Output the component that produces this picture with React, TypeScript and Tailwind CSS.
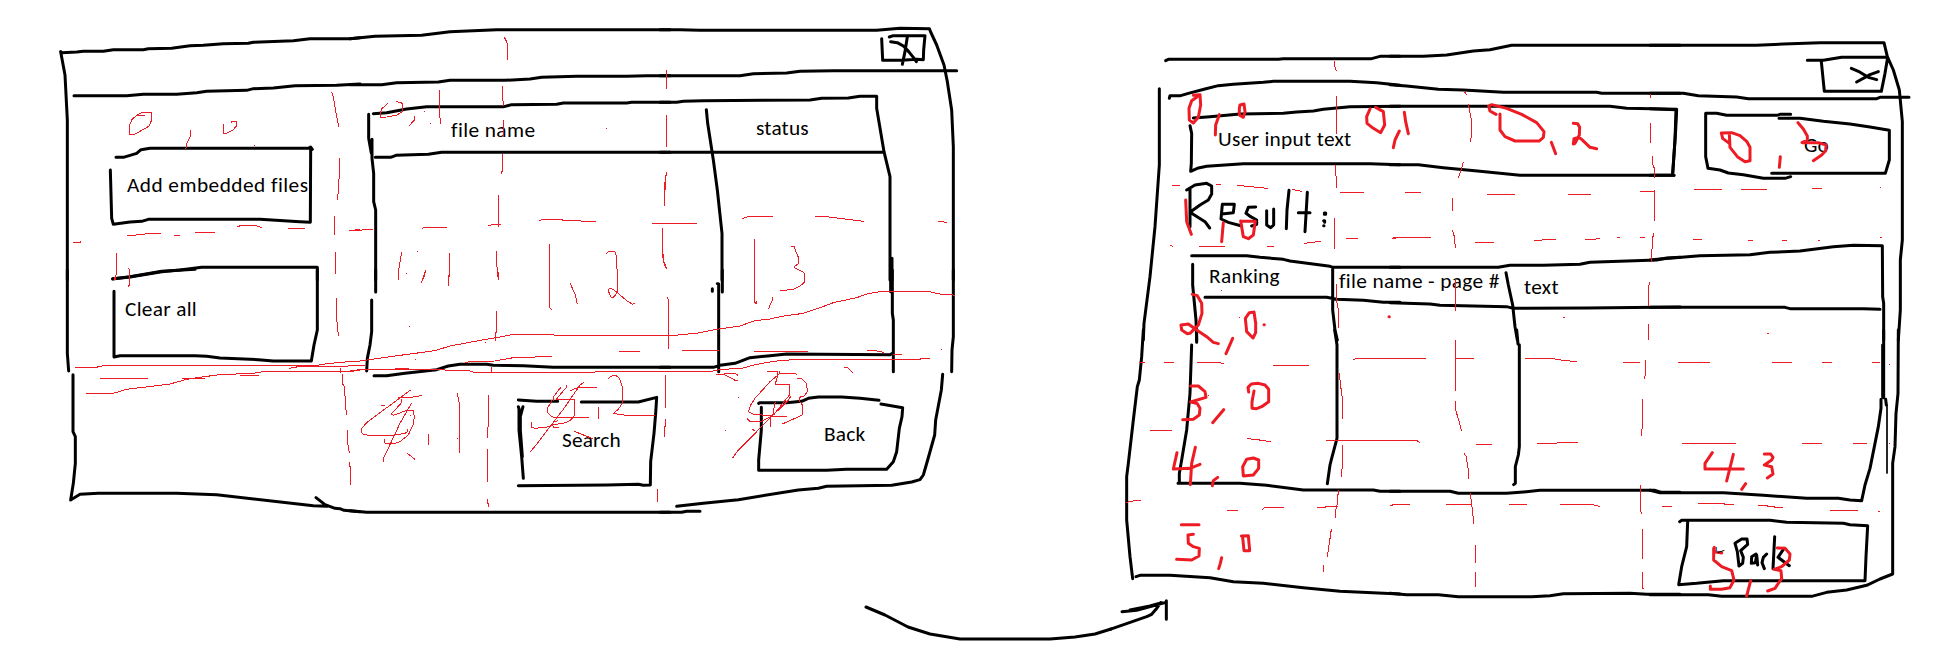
import React from "react";

type Tile = {
  x: number;
  y: number;
  ink: string;
  thin?: string;
  marker?: string;
};

// Pen strokes, grouped by canvas tile. Units are thirds of a pixel from the tile's corner.
const tiles: Tile[] = [
  {
    x: 40,
    y: 10,
    ink: "M62,125 L65,128 110,126 130,124 190,124 220,119 310,119 325,116 395,115 450,107 490,106 550,101 625,100 640,97 760,92 810,86 930,86 960,83 M62,125 L75,195 82,330 82,810 M102,257 H260 L310,253 410,253 470,248 500,244 620,241 640,236 700,234 765,227 890,226 960,222 M228,442 H250 L290,430 303,419 330,415 H805 L812,411 817,418 M812,418 L811,637 780,635 660,628 H325 L305,634 270,636 220,643 215,625 211,480 M218,806 L270,801 365,785 420,780 485,772 H832 V810",
    thin: "M268,373 L269,345 276,328 292,315 304,308 334,307 334,332 328,348 312,357 284,373 268,373 M292,315 H314 M550,342 V370 L562,369 578,361 590,347 590,334 574,334 574,338 M452,360 V378 L441,400 437,418 M643,407 h3 M875,247 L880,262 890,320 896,350 M898,445 V490 L895,545 892,570 M883,618 V674 M886,727 V791 M262,676 H278 L325,671 H362 M403,676 H419 M466,667 H524 M592,650 L602,647 H648 L665,653 M745,655 H794 M100,697 H120 L123,694 M928,661 H945 L948,658 H960 M229,730 V790 L226,810 M265,773 L268,780 V810",
  },
  {
    x: 350,
    y: 10,
    ink: "M0,86 L75,79 215,76 300,65 440,59 H960 M0,224 H95 L140,218 265,216 300,211 465,211 540,207 575,202 680,199 830,199 890,197 960,197 M70,311 L110,308 170,297 230,290 H462 L485,284 620,283 640,279 830,279 845,277 960,277 M56,313 V385 L64,430 M66,388 V445 L71,490 71,575 77,600 V810 M76,442 H122 L138,436 235,433 275,427 H960",
    thin: "M463,82 L470,95 472,105 V150 M458,229 V265 L461,287 M461,330 V382 M458,433 V478 L454,491 M445,556 V650 M415,647 L430,643 H453 M217,655 L225,652 H291 M568,631 L582,628 H632 L640,631 687,631 695,634 H738 M906,640 H960 M950,180 V237 M950,316 V411 M949,487 L946,520 943,587 M937,655 V735 L943,765 950,776 M0,661 H20 L68,658 M268,240 V290 L271,340 h3 M113,280 L95,297 90,311 92,322 110,321 140,315 158,305 158,284 155,279 138,274 M193,317 V330 L184,340 178,349 M223,304 h3 M241,341 h3 M769,355 h3 M202,724 h3 M169,790 h3 M155,727 L147,775 145,810 M298,730 V790 L295,810 M227,779 L218,808 M439,724 L440,760 445,810 M598,703 V810 M769,731 L775,725 H795 L800,740 802,810",
  },
  {
    x: 660,
    y: 10,
    ink: "M0,59 H60 L120,61 H650 L720,55 808,56 812,66 830,105 852,165 862,215 875,300 880,410 V810 M665,86 L668,151 H725 L770,148 790,149 791,120 795,77 H700 L688,81 M742,80 L735,125 727,163 M692,95 L712,98 730,108 742,120 760,142 769,155 M0,197 H240 L280,191 380,189 420,184 520,182 H890 M0,277 H50 L70,274 130,272 450,270 485,265 565,264 600,259 H650 V295 L672,425 690,500 V810 M696,745 V810 M0,427 H672 M139,299 L143,340 160,450 172,540 186,670 V810",
    thin: "M19,180 V237 M19,316 V411 M19,487 L13,530 V587 M0,640 H111 M7,655 V715 L12,755 20,776 M247,626 L268,619 H339 M466,619 H490 L611,634 M835,634 L860,637 M283,688 V810 M393,709 H403 L405,718 415,742 V762 L403,769 403,773 432,788 V810 M430,368 h3",
  },
  {
    x: 40,
    y: 270,
    ink: "M82,0 V250 L86,303 M99,314 V485 L106,500 106,580 100,640 92,690 120,673 175,670 410,670 530,674 820,707 862,709 M828,683 L855,704 885,715 900,716 912,721 960,725 M218,27 L270,20 365,4 465,-2 M832,0 V180 L822,225 814,273 H700 L655,269 540,264 500,259 465,257 H240 L222,261 V64",
    thin: "M229,0 V12 L222,30 M268,0 V45 L265,50 M886,0 V12 M889,85 V135 L895,197 M901,294 V308 M907,313 V340 L913,350 919,434 M922,481 V510 L928,550 M928,577 V587 L931,590 V644 M105,292 H168 L195,286 H836 M748,295 L775,290 830,286 870,280 950,273 H960 M180,325 H323 M427,325 H495 M600,316 H656 M138,370 H220 L260,358 390,342 440,328 470,323 540,314 640,310 675,304 H935 L960,300 M775,289 H920 L930,286 H960",
  },
  {
    x: 350,
    y: 270,
    ink: "M77,0 V66 M65,90 V185 L60,225 52,265 50,303 M72,317 H110 L165,310 260,299 295,288 330,283 410,283 430,286 520,287 610,292 H960 M0,722 L50,727 H960 M505,390 L560,394 H623 M694,396 H865 L920,382 917,430 912,490 902,575 901,645 880,646 865,643 770,645 505,647 M505,410 L512,436 519,410 M507,415 V480 L515,560 520,625 M511,430 V480 L517,560",
    thin: "M145,0 V25 M169,10 h3 M227,0 L222,22 214,38 M298,0 V10 L295,47 M442,0 L445,10 V28 M598,0 V113 L605,119 M802,0 V62 L797,75 790,82 783,82 776,65 776,57 785,56 800,66 830,92 848,103 854,100 M661,40 L667,55 676,75 682,103 M439,124 V186 L436,190 V214 M178,170 h3 M196,268 h3 M406,217 h3 M0,274 H25 L50,270 150,256 255,242 300,228 380,213 455,200 485,194 H610 L613,196 H960 M345,278 L360,275 435,273 490,263 530,262 605,259 M808,244 H869 M952,82 L955,90 V238 M0,286 H45 M0,303 L20,300 130,297 270,297 285,300 350,300 370,306 H735 V303 H960 M135,295 H178 M424,290 V306 M180,361 L150,384 90,428 50,458 36,475 34,487 40,493 55,496 130,496 165,490 174,483 170,476 M180,361 h3 M143,382 H185 L217,376 M155,388 L153,400 124,432 130,436 165,423 190,421 193,440 190,462 175,495 150,515 135,520 105,520 104,508 M184,400 L150,460 110,545 100,565 V577 M93,406 H106 M181,436 h3 M322,370 L328,400 V548 M322,505 h3 M235,492 V526 M172,550 L196,569 M415,376 V470 L412,475 V503 M412,538 V635 M412,688 V698 L415,702 V710 M1,589 V644 M634,350 L612,378 610,392 M649,344 V352 L618,389 H673 V437 L660,452 640,460 607,464 600,470 555,475 544,472 V457 M607,389 L594,412 592,428 605,439 610,442 H718 M661,362 L685,352 H742 M701,337 L690,345 640,418 600,470 560,523 541,545 M745,410 V448 M625,452 L610,455 607,465 612,473 626,472 M673,484 L728,506 M775,325 L785,318 797,316 808,325 817,350 V400 L805,418 790,430 805,433 830,436 H915 M946,316 V413 M946,448 V465 L943,473 V500 M922,658 V695",
  },
  {
    x: 660,
    y: 270,
    ink: "M187,0 V66 M176,305 V42 L172,41 M157,56 V64 M692,0 V65 M697,0 V130 L700,150 V305 M880,0 V200 L876,240 875,305 M848,313 L844,360 827,450 824,495 803,570 790,615 780,629 755,636 695,646 500,649 475,655 415,660 235,689 130,700 50,709 M0,292 H160 L180,286 225,280 270,263 330,257 380,252 690,254 700,248 M0,727 H65 L80,724 H120 M296,400 L300,398 H380 L425,394 445,385 475,381 545,381 600,385 657,391 M663,402 L728,413 726,440 718,475 710,545 700,575 680,598 H560 L500,601 H296 V570 L304,480 V412",
    thin: "M283,0 V98 L290,100 290,94 M418,0 L432,8 V38 L420,48 400,58 360,62 M337,80 V90 L325,118 M22,82 L25,90 V238 M0,196 H45 L70,193 110,190 170,178 240,168 285,152 330,147 365,139 430,130 475,115 520,98 590,83 620,72 665,64 H803 L840,72 870,74 886,76 M66,241 H178 M282,244 H443 M621,241 H640 L672,247 M700,253 H725 M844,238 h3 M0,303 H160 L180,299 250,294 285,284 340,274 410,268 H780 L785,265 H809 M168,313 H190 L210,322 225,331 234,331 M192,310 H225 L235,317 M235,382 h3 M196,481 h3 M553,291 H560 L578,307 M16,316 V413 M16,448 V468 L13,473 V500 M322,304 H352 V320 L346,342 H388 V375 L340,436 M358,304 V312 L330,335 285,385 272,405 265,425 280,432 340,439 H380 M358,310 H402 L410,313 M412,325 H425 L440,342 442,365 432,378 418,382 420,395 427,405 427,435 405,445 385,454 367,462 M394,377 L385,390 355,420 335,438 290,485 235,540 217,565 M262,446 L270,454 305,454 335,438 M346,395 L340,425 338,440 M331,440 V470 M277,478 L284,482",
  },
  {
    x: 1110,
    y: 30,
    ink: "M167,92 L175,88 H505 L520,86 785,86 810,79 870,79 M148,176 V405 L135,590 120,740 102,880 100,930 M178,205 L180,197 H212 L235,190 285,177 325,167 370,163 460,157 490,154 H720 L800,158 870,166 M250,264 L300,260 390,252 520,250 560,246 610,243 640,238 720,230 870,229 M240,287 L245,310 244,400 242,424 262,415 290,409 400,401 H780 L870,404 M230,480 L255,465 290,460 305,468 305,492 295,510 270,525 240,547 285,575 299,594 M240,475 V590 M335,552 L370,548 373,523 337,523 333,567 355,577 395,588 M437,531 L415,532 408,550 422,560 440,570 440,583 425,588 M470,542 V585 L482,593 491,585 V537 M537,481 L531,540 529,596 M592,487 L585,605 M565,548 H600 M643,549 h4 v4 h-4 M641,572 h3 v5 M641,587 h1 M245,677 H410 L450,682 520,688 540,693 660,709 670,712 H870 M248,703 V765 L258,870 260,930 M285,802 H650 L680,808 760,811 820,817 870,817 M668,712 V840 L675,900 682,930",
    thin: "M673,94 V105 L679,122 M679,199 V311 M676,404 V430 L679,440 V473 M673,565 V656 M679,763 V810 L685,840 V893 M186,466 H210 M318,463 H333 M381,466 L473,475 M547,478 L575,484 M691,487 H761 M180,646 L190,650 M268,649 H344 M471,649 H491 M583,640 L632,634 M708,625 H743 M847,626 L870,622 M333,780 h3 M386,861 h5",
    marker:
      "M250,196 L270,194 272,225 265,262 250,279 238,270 237,235 245,212 262,200 M328,254 L317,285 316,315 M390,225 L402,222 405,245 400,262 388,255 388,235 390,225 M797,232 L820,245 824,285 812,308 790,295 771,280 770,260 780,237 M868,303 L855,330 850,353 M227,510 L230,575 244,613 M340,578 L335,635 M392,573 L436,574 430,615 415,626 400,620 392,573 M247,793 L262,797 275,820 276,850 265,885 240,910 232,911 215,900 213,885 235,882 260,900 290,920 310,937 325,941 M432,846 L437,880 437,908 429,924 410,905 406,865 418,848 432,846 M368,925 L348,971 M462,884 h1 M837,860 h1",
  },
  {
    x: 1390,
    y: 30,
    ink: "M0,79 H100 L170,75 250,63 300,59 365,46 H870 M0,164 L50,168 145,178 220,180 340,187 H620 L635,190 H870 M0,229 H660 L710,235 860,238 857,300 848,432 M0,404 H85 L160,413 270,424 390,436 H852 M0,712 H325 L360,706 460,706 570,703 600,697 800,690 830,684 870,682 M0,818 L120,822 150,826 350,830 370,835 590,834 870,831 M348,728 L355,765 368,825 375,890 382,930",
    thin: "M223,187 H227 L229,196 M235,223 L243,265 V325 L241,335 M220,397 L210,430 205,445 M187,505 V542 M187,599 L193,620 196,654 M196,750 V843 M781,192 V203 M781,280 V338 M787,379 V400 L793,415 V443 M793,481 V572 M790,610 L787,640 784,697 M778,757 L775,780 V827 M775,883 V930 M45,487 H92 M291,493 H374 M534,493 H602 M751,484 H793 M5,626 L15,622 H122 M255,637 H311 M433,631 H455 L460,628 H497 M585,628 H612 L629,625 M681,622 H689 M750,622 H764 M520,861 h4",
    marker:
      "M43,247 L47,275 55,311 M318,253 L300,243 296,228 305,224 350,235 395,253 440,278 462,305 460,322 448,333 375,333 345,320 330,300 330,252 M484,337 L497,371 M550,280 L563,281 569,292 568,315 555,340 550,342 552,326 565,322 575,328 600,352 620,356",
  },
  {
    x: 1650,
    y: 30,
    ink: "M0,46 H320 L400,42 510,38 H702 L712,80 730,120 748,180 757,275 V630 L751,690 V840 L745,930 M472,91 H520 L575,82 H713 L705,130 694,184 H523 L514,95 M604,115 L625,124 655,142 680,149 M685,125 L660,134 620,156 M0,190 H100 L145,197 260,201 295,206 H680 L690,202 H777 M0,236 L78,239 75,330 68,432 M0,436 H72 M422,253 H390 L380,256 H230 L200,250 H167 V380 L174,415 210,420 235,429 280,434 340,445 H405 L422,440 M387,265 H450 L520,274 600,282 660,291 718,301 V390 L706,430 H365 M0,690 L30,687 150,677 300,674 360,667 450,663 550,650 610,646 697,647 698,800 701,820 V930 M0,832 H405 L420,836 640,836 690,838",
    thin: "M132,478 H216 M273,478 H351 M486,475 H516 M129,628 H156 M294,631 H309 M396,631 H411 M504,631 H509 M690,622 H696 M690,472 h3 M352,909 h5",
    marker:
      "M238,340 L218,325 214,309 245,308 270,317 290,334 300,352 300,392 285,395 262,380 240,352 238,312 M391,380 L388,412 M444,278 L460,297 472,318 472,330 456,338 H505 L528,345 527,362 515,375 490,392",
  },
  {
    x: 1110,
    y: 330,
    ink: "M100,0 L95,80 88,150 82,170 70,270 55,400 50,440 V570 L60,680 68,746 M78,740 L90,736 180,736 300,743 370,755 460,760 580,773 690,784 870,792 M260,0 V37 M245,45 L240,190 230,300 215,390 208,430 V458 M204,460 H390 L470,466 580,480 H790 L810,484 870,484 M674,0 L681,45 V325 L665,385 660,405 652,461 M0,898 L110,860 125,853 138,838 152,818 M36,845 L80,841 168,817 M60,840 L120,828 155,818 M169,812 V868",
    thin: "M88,97 H105 M163,97 H192 M262,97 H318 L342,100 M489,106 H597 M730,88 L742,85 H870 M688,130 L691,160 697,205 V266 M697,346 V405 L694,440 M685,481 L682,520 676,545 V563 M664,598 L658,640 652,680 M640,706 V725 M120,301 H185 M411,326 L445,329 455,332 483,334 M648,331 H870 M48,517 L70,513 92,511 M351,541 H383 M457,538 L465,532 H521 M622,532 H645 L650,529 H685 M840,526 L870,523 M293,196 h4",
    marker:
      "M242,168 H265 L285,185 288,202 242,216 262,221 270,235 268,255 250,268 218,269 M341,239 L308,278 M416,186 L414,172 424,162 445,160 465,165 476,178 476,215 455,230 440,236 426,235 426,215 432,183 M201,368 L190,417 240,415 270,403 M256,352 L245,400 241,464 M323,442 L310,452 307,467 M410,388 L398,410 400,438 430,435 446,415 446,390 430,384 410,388 M214,584 H267 M250,613 L234,615 235,640 250,650 268,655 267,678 245,690 200,688 M335,683 L331,700 326,716 M394,618 L415,617 419,662 402,662 398,622",
  },
  {
    x: 1390,
    y: 330,
    ink: "M380,0 L384,42 M388,44 V350 L385,375 376,410 V460 L371,464 M0,484 H180 L205,490 350,490 400,486 450,481 H795 L815,487 H870 M0,790 L50,794 145,794 205,800 425,800 480,797 520,791 720,790 770,793 H870",
    thin: "M196,30 V182 M0,85 H107 M196,85 H252 M196,213 V237 L206,270 214,302 M222,370 L228,378 235,420 V446 M241,490 L250,565 V581 M256,645 V698 M256,727 V770 M405,85 H480 L520,91 560,95 M699,97 H750 M864,97 H870 M775,0 V30 M766,91 V132 L763,147 M757,208 V287 L754,318 M751,465 V537 L754,551 M757,598 V686 M757,727 V775 h4 M0,331 H80 L89,338 M258,343 H306 M441,340 H500 L503,337 H564 M0,526 L15,523 H60 M168,523 H244 M357,523 H411 M510,523 H605 L629,529 M816,529 H846",
  },
  {
    x: 1650,
    y: 330,
    ink: "M701,0 V203 M698,45 V200 M693,208 V235 L685,290 675,340 660,415 645,465 635,512 600,510 565,505 470,505 340,496 220,488 H30 L0,481 M707,208 L709,225 M745,0 L744,190 738,250 735,350 728,400 V732 L690,747 650,766 590,780 530,787 485,799 H215 L175,794 H0 M89,575 L95,571 H360 L410,577 580,580 600,584 653,587 648,680 645,752 H220 L140,760 86,764 95,710 110,650 113,575 M255,640 L262,665 267,708 M257,638 L275,627 291,627 293,643 272,662 280,682 278,700 267,708 M318,672 L305,680 304,700 316,698 320,675 323,705 M350,672 L340,682 336,698 343,716 M374,620 L369,716 M402,655 L384,682 418,707",
    thin: "M84,97 H180 M366,97 H426 M516,97 H546 M666,97 H690 M717,103 h3 M96,340 H258 M456,340 H516 M609,340 H651 M717,340 h3 M36,529 H66 M144,520 H222 L225,523 H252 M324,526 H350 L354,529 H372 L375,532 H399 M540,541 H624 M684,544 h5",
    marker:
      "M215,669 L193,665 V652 M191,655 V690 L215,710 245,722 252,750 240,773 215,778 181,778 V768 M302,752 L290,798 M382,654 L405,655 420,672 418,690 395,710 372,718 393,722 395,745 375,775 353,783 M187,368 L165,400 165,417 H280 M250,373 L230,453 M287,461 L275,478 M343,372 H362 L369,382 365,390 343,405 365,410 369,432 352,444",
  },
];

function Tiles({ pen }: { pen: "ink" | "thin" | "marker" }) {
  const scale = 1 / 3;
  return (
    <>
      {tiles.map((t) =>
        t[pen] ? (
          <path
            key={`${t.x}-${t.y}`}
            d={t[pen]}
            transform={`translate(${t.x} ${t.y}) scale(${scale})`}
          />
        ) : null,
      )}
    </>
  );
}

function Sketch() {
  return (
    <svg
      className="pointer-events-none absolute inset-0"
      width="1946"
      height="647"
      viewBox="0 0 1946 647"
      fill="none"
      strokeLinecap="round"
      strokeLinejoin="round"
    >
      <g stroke="#000" strokeWidth="9">
        <Tiles pen="ink" />
        <path strokeWidth="3" d="M866,607 L885,615 908,627 930,634 960,639 1050,639 1075,637 1095,634 1111,629" />
        <path strokeWidth="1.7" d="M1887,405 V473" />
      </g>
      <g stroke="#ed1c24" strokeWidth="3" strokeLinecap="butt" shapeRendering="crispEdges">
        <Tiles pen="thin" />
      </g>
      <g stroke="#ed1c24" strokeWidth="9">
        <Tiles pen="marker" />
      </g>
      <path d="M1716.5 547v5" stroke="#0a78c8" strokeLinecap="butt" />
      <path d="M1718 552.5l6-2" stroke="#000" />
    </svg>
  );
}

function FilesWindow() {
  return (
    <section className="w-[1100px] shrink-0">
      <header className="h-[96px]" />
      <div className="flex h-[275px]">
        <div className="ml-[112px] flex w-[205px] flex-col gap-[47px] pt-[52px]">
          <button className="flex h-[75px] items-start pt-[25px] pl-[15px] tracking-[0.45px]">Add embedded files</button>
          <button className="flex h-[91px] items-start pt-[27px] pl-[13px] tracking-[0.3px]">Clear all</button>
        </div>
        <div className="ml-[54px] flex h-[57px]">
          <div className="w-[338px] pt-[22px] pl-[80px] tracking-[0.4px]">file name</div>
          <div className="w-[180px] pt-[20px] pl-[47px] tracking-[0.2px]">status</div>
        </div>
      </div>
      <footer className="flex pt-[29px] pl-[518px]">
        <button className="flex h-[85px] w-[139px] items-start pt-[28px] pl-[44px] tracking-[0.15px]">Search</button>
        <button className="ml-[101px] flex h-[75px] w-[147px] items-start pt-[22px] pl-[66px] tracking-[0.2px]">Back</button>
      </footer>
    </section>
  );
}

function SearchWindow() {
  return (
    <section className="grow">
      <header className="h-[107px]" />
      <div className="flex h-[68px] pl-[90px]">
        <div className="w-[486px] pt-[20px] pl-[28px] tracking-[0.3px]">User input text</div>
        <button className="ml-[29px] flex w-[185px] items-start pt-[26px] pl-[99px]">Go</button>
      </div>
      <div className="mt-[75px] flex pl-[90px]">
        <div className="w-[143px] pt-[14px] pl-[19px] tracking-[0.3px]">Ranking</div>
        <div className="w-[177px] pt-[19px] pl-[6px] tracking-[0.35px]">file name - page #</div>
        <div className="grow pt-[25px] pl-[14px] tracking-[0.3px]">text</div>
      </div>
    </section>
  );
}

export default function App() {
  return (
    <main className="relative flex h-[647px] w-[1946px] overflow-hidden bg-white font-['Carlito','Lato',sans-serif] text-[21.33px] leading-[24px] whitespace-nowrap text-black">
      <FilesWindow />
      <SearchWindow />
      <Sketch />
    </main>
  );
}
